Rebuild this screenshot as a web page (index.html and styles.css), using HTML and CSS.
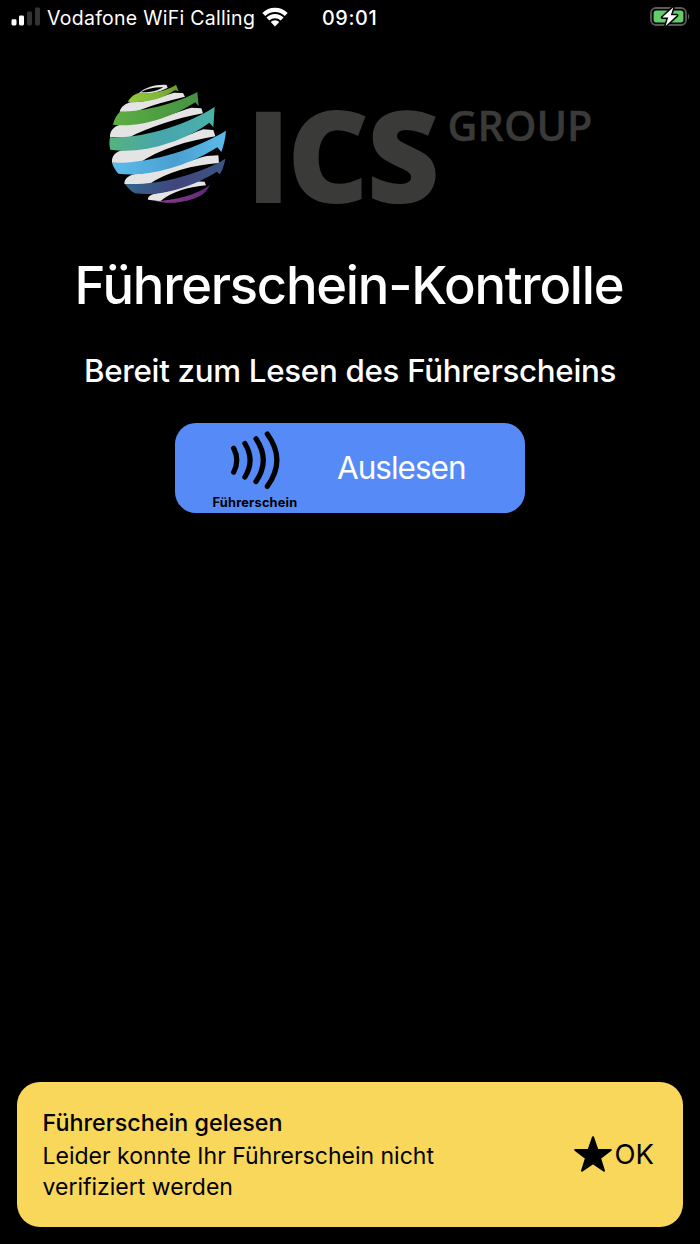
FILE: index.html
```
<!DOCTYPE html>
<html lang="de">
<head>
<meta charset="utf-8">
<title>Führerschein-Kontrolle</title>
<link rel="stylesheet" href="styles.css">
</head>
<body>
<div class="screen">
  <header class="status">
    <svg class="signal" viewBox="0 0 30 20" width="30" height="20">
      <rect x="0.5" y="12.3" width="5" height="6.2" rx="1.4" fill="#fff"/>
      <rect x="8" y="8.6" width="5" height="9.9" rx="1.4" fill="#fff"/>
      <rect x="16" y="4.6" width="5" height="13.9" rx="1.4" fill="#333"/>
      <rect x="24" y="0.6" width="5" height="17.9" rx="1.4" fill="#333"/>
    </svg>
    <span class="carrier">Vodafone WiFi Calling</span>
    <svg class="wifi" viewBox="0 0 26 19" width="26" height="19">
      <g fill="none" stroke="#fff" stroke-width="4.2">
        <path d="M1.800 7.400a15.900 15.900 0 0 1 22.400 0"/>
        <path d="M5.900 12a10.100 10.100 0 0 1 14.200 0"/>
      </g>
      <path fill="#fff" d="M13 19.400l-4.300-4.300a6.100 6.100 0 0 1 8.600 0z"/>
    </svg>
    <span class="time">09:01</span>
    <svg class="battery" viewBox="0 0 42 22" width="42" height="22">
      <rect x="1" y="2" width="35" height="17" rx="5" fill="none" stroke="#5a5a5c" stroke-width="1.8"/>
      <path d="M38 7.400q2.600 3 0 6.400z" fill="#5a5a5c"/>
      <rect x="3.600" y="4.600" width="29.800" height="11.800" rx="2.600" fill="#63ce67"/>
      <path d="M23.400 1.200L12.200 11.600h6l-2.600 8.400L27 9.300h-6.200z" fill="#fff" stroke="#000" stroke-width="3" stroke-linejoin="round" paint-order="stroke"/>
    </svg>
  </header>

  <main class="content">
    <svg class="logo" viewBox="0 0 500 140" width="500" height="140">
      <defs>
        <linearGradient id="lime" x1="0" x2="1"><stop offset="0" stop-color="#90c83c"/><stop offset=".6" stop-color="#83b63a"/><stop offset="1" stop-color="#67972f"/></linearGradient>
        <linearGradient id="green" x1="0" x2="1"><stop offset="0" stop-color="#5fae45"/><stop offset=".5" stop-color="#4f9f42"/><stop offset="1" stop-color="#469344"/></linearGradient>
        <linearGradient id="teal" x1="0" x2="1"><stop offset="0" stop-color="#55b27c"/><stop offset=".5" stop-color="#47a6ae"/><stop offset="1" stop-color="#4ab1a8"/></linearGradient>
        <linearGradient id="blue" x1="0" x2="1"><stop offset="0" stop-color="#5bbdec"/><stop offset=".55" stop-color="#4a9fd0"/><stop offset="1" stop-color="#5bbbea"/></linearGradient>
        <linearGradient id="navy" x1="0" x2="1"><stop offset="0" stop-color="#31678f"/><stop offset=".5" stop-color="#41457c"/><stop offset="1" stop-color="#3b5585"/></linearGradient>
        <linearGradient id="purple" x1="0" x2="1"><stop offset="0" stop-color="#8f3d91"/><stop offset="1" stop-color="#5b2a78"/></linearGradient>
      </defs>
      <g transform="scale(.33333)">
        <g fill="#e4e4e4">
          <path d="M117 54C135 37 170 27 200 30L203 38C188 47 165 54 140 56Z"/>
          <path d="M59 110C63 95 76 87 90 82C150 82 190 61 222 53L249 54L255 65C210 76 150 91 105 111Z"/>
          <path d="M30 186C29 166 44 153 60 149C150 146 230 110 275 98L304 100L309 115C230 130 150 155 84 189Z"/>
          <path d="M36 263C34 242 48 231 65 226C160 227 260 181 310 163L340 165L346 184C260 198 180 222 114 266Z"/>
          <path d="M73 327C73 309 88 301 105 297C190 292 270 254 320 243L355 241L357 264C280 270 200 290 144 330Z"/>
          <path d="M144 374C143 363 155 358 170 355C220 350 260 326 285 319L314 320L318 331C270 335 215 350 181 379Z"/>
        </g>
        <path fill="#000" d="M122 52C140 41 165 36 190 37C175 47 150 53 122 52Z"/>
        <path fill="url(#lime)" d="M83 80C92 66 104 56 118 53C155 57 200 48 228 29L236 48L224 46C190 72 130 86 83 80Z"/>
        <path fill="url(#green)" d="M59 111C140 109 235 82 292 51L296 94L286 82C220 125 120 160 39 149C43 132 50 120 59 111Z"/>
        <path fill="url(#teal)" d="M30 187C140 190 265 146 344 96L340 157L328 143C250 200 130 238 31 224C27 210 28 198 30 187Z"/>
        <path fill="url(#blue)" d="M36 263C150 267 290 221 378 167C376 190 371 212 364 231L352 217C270 270 150 308 55 296C45 285 40 275 36 263Z"/>
        <path fill="url(#navy)" d="M75 327C180 331 300 296 376 251C373 270 367 285 360 298L350 290C280 335 180 366 105 355C92 348 83 339 75 327Z"/>
        <path fill="url(#purple)" d="M166 378C220 377 290 361 329 330C323 345 316 352 305 360C270 381 210 390 166 378Z"/>
      </g>
      <g class="logo-big">
        <text transform="translate(146.300 128)">I</text>
        <text transform="translate(187 128)">C</text>
        <text transform="translate(266.500 128)">S</text>
      </g>
      <text class="logo-small" x="347.500" y="65.800" textLength="145" lengthAdjust="spacingAndGlyphs">GROUP</text>
    </svg>

    <h1 class="title">Führerschein-Kontrolle</h1>
    <p class="subtitle">Bereit zum Lesen des Führerscheins</p>

    <button class="read" type="button">
      <span class="read-icon">
        <svg viewBox="0 0 50 58" width="50" height="58">
          <g fill="none" stroke="#000" stroke-width="5.2" stroke-linecap="round">
            <path d="M3.700 17.300q6.200 12 0 23.800"/>
            <path d="M14.900 12.500q10.400 16.800 0 33.500"/>
            <path d="M26 7.800q14.600 21.400 0 42.700"/>
            <path d="M37.300 3q19.200 26.200 0 52.300"/>
          </g>
        </svg>
        <span class="read-caption">Führerschein</span>
      </span>
      <span class="read-label">Auslesen</span>
    </button>
  </main>

  <section class="toast">
    <div class="toast-text">
      <strong class="toast-title">Führerschein gelesen</strong>
      <p class="toast-body">Leider konnte Ihr Führerschein nicht<br>verifiziert werden</p>
    </div>
    <div class="toast-action">
      <svg viewBox="0 0 38 36" width="38" height="36">
        <path d="M19 1.200L23.300 13.700L36.800 13.900L26 22.100L30 34.800L19 27.200L8 34.800L12 22.100L1.200 13.900L14.700 13.700Z" fill="#000" stroke="#000" stroke-width="2" stroke-linejoin="round"/>
      </svg>
      <span class="toast-ok">OK</span>
    </div>
  </section>
</div>
</body>
</html>
```
FILE: styles.css
```
* { box-sizing: border-box; }
body { margin: 0; background: #000; color: #fff; font-family: Inter, "Liberation Sans", sans-serif; }
h1, p { margin: 0; font-weight: inherit; }
svg { display: block; flex: none; overflow: visible; }
.screen { width: 700px; height: 1244px; display: flex; flex-direction: column; background: #000; overflow: hidden; white-space: nowrap; }

.status { height: 36px; display: flex; align-items: center; padding: 0 8px 0 11px; flex: none; }
.signal { margin-top: -2px; }
.carrier { width: 207px; margin-left: 6px; font-size: 19.500px; letter-spacing: .28px; line-height: 36px; }
.wifi { margin: -3px 0 0 8px; }
.time { margin-left: 34px; font-size: 19.800px; font-weight: 500; letter-spacing: .6px; line-height: 36px; }
.battery { margin: -2px 0 0 auto; }

.content { flex: 1; display: flex; flex-direction: column; align-items: center; padding-top: 39px; }
.logo-big { font: 800 127px "Open Sans", "Noto Sans", sans-serif; fill: #3a3a38; }
.logo-small { font: 600 42px "Open Sans", "Noto Sans", sans-serif; fill: #3a3a38; stroke: #3a3a38; stroke-width: .4px; }
.title { margin: 38px 2px 0 0; font-size: 52.500px; font-weight: 500; line-height: 64px; letter-spacing: -1.250px; }
.subtitle { margin-top: 34px; font-size: 31.300px; font-weight: 500; line-height: 40px; letter-spacing: -.300px; }

.read { margin-top: 31.500px; width: 350px; height: 90.500px; padding: 0 0 0 37px; border: 0; border-radius: 21px; background: #568bf7; color: #fff; font-family: inherit; display: flex; align-items: center; }
.read-icon { width: 86px; height: 90.500px; padding-top: 8px; display: flex; flex-direction: column; align-items: center; }
.read-caption { margin-top: 6.500px; font-size: 12.800px; font-weight: 700; letter-spacing: .2px; line-height: 16px; color: #000; }
.read-label { margin-left: 39px; font-size: 31.500px; letter-spacing: -1px; line-height: 40px; }

.toast { flex: none; margin: 0 17px 17px; height: 145.500px; border-radius: 23px; background: #f8d75a; color: #000; display: flex; align-items: center; justify-content: space-between; padding: 0 29px 0 25.500px; }
.toast-text { padding-bottom: 3px; }
.toast-title { display: block; font-size: 23.300px; font-weight: 500; line-height: 37.500px; }
.toast-body { font-size: 23px; line-height: 30.500px; }
.toast-action { display: flex; align-items: center; gap: 2px; }
.toast-ok { font-size: 27.500px; line-height: 36px; }
```
